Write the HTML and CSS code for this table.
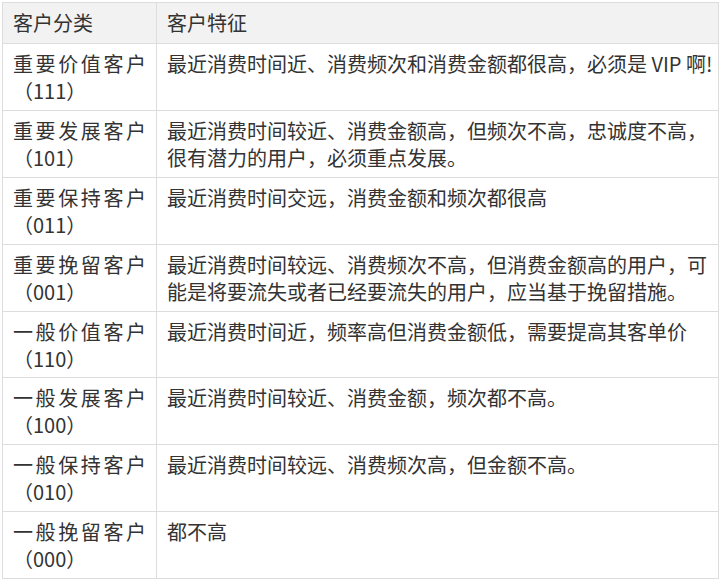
FILE: index.html
```html
<!DOCTYPE html>
<html lang="zh-CN">
<head>
<meta charset="utf-8">
<title>客户分类</title>
<link rel="stylesheet" href="styles.css">
</head>
<body>
<table class="rfm">
  <colgroup>
    <col class="col-type">
    <col class="col-desc">
  </colgroup>
  <thead>
    <tr><th>客户分类</th><th>客户特征</th></tr>
  </thead>
  <tbody>
    <tr><td class="type">重要价值客户（111）</td><td>最近消费时间近、消费频次和消费金额都很高，必须是 VIP 啊!</td></tr>
    <tr><td class="type">重要发展客户（101）</td><td>最近消费时间较近、消费金额高，但频次不高，忠诚度不高，很有潜力的用户，必须重点发展。</td></tr>
    <tr><td class="type">重要保持客户（011）</td><td>最近消费时间交远，消费金额和频次都很高</td></tr>
    <tr><td class="type">重要挽留客户（001）</td><td>最近消费时间较远、消费频次不高，但消费金额高的用户，可能是将要流失或者已经要流失的用户，应当基于挽留措施。</td></tr>
    <tr><td class="type">一般价值客户（110）</td><td>最近消费时间近，频率高但消费金额低，需要提高其客单价</td></tr>
    <tr><td class="type">一般发展客户（100）</td><td>最近消费时间较近、消费金额，频次都不高。</td></tr>
    <tr><td class="type">一般保持客户（010）</td><td>最近消费时间较远、消费频次高，但金额不高。</td></tr>
    <tr><td class="type">一般挽留客户（000）</td><td>都不高</td></tr>
  </tbody>
</table>
</body>
</html>
```
FILE: styles.css
```css
html, body {
  background: #ffffff;
}
body {
  margin: 2px;
  font-family: "Noto Sans CJK SC", "Noto Sans", sans-serif;
  font-size: 20px;
  color: #333333;
  text-spacing-trim: space-all;
}
.rfm {
  border-collapse: collapse;
  table-layout: fixed;
  width: 717px;
}
.col-type {
  width: 154px;
}
.rfm th,
.rfm td {
  border: 1px solid #dddddd;
  padding: 6px 2px 5.875px 10px;
  line-height: 27px;
  text-align: left;
  vertical-align: top;
  font-weight: normal;
}
.rfm th {
  background: #f2f2f2;
  padding-top: 6px;
  padding-bottom: 7px;
}
.rfm td.type {
  text-align: justify;
  padding-right: 10px;
}
```
